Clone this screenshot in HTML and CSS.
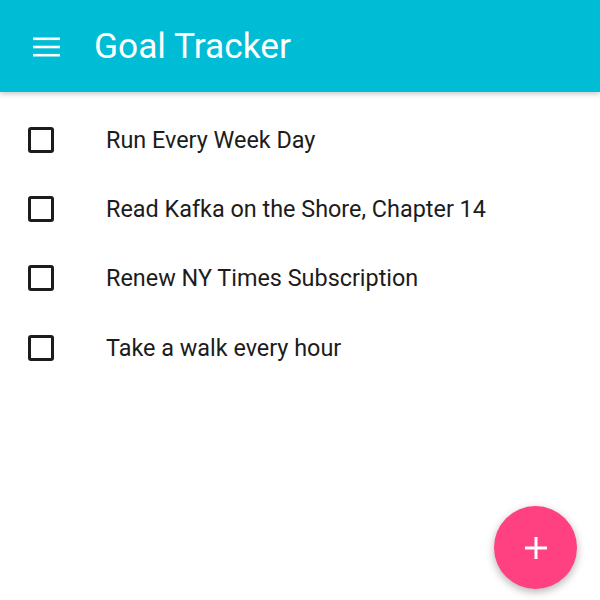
FILE: index.html
```html
<!DOCTYPE html>
<html>
<head>
<meta charset="utf-8">
<link rel="stylesheet" href="styles.css">
</head>
<body>
<header class="toolbar">
  <svg class="menu" width="28" height="20" viewBox="0 0 28 20">
    <rect x="0" y="0.5" width="27" height="2.6" fill="#fff"/>
    <rect x="0" y="8.7" width="27" height="2.6" fill="#fff"/>
    <rect x="0" y="16.9" width="27" height="2.6" fill="#fff"/>
  </svg>
  <h1 class="title">Goal Tracker</h1>
</header>
<ul class="list">
  <li class="item"><span class="box"></span><span class="label">Run Every Week Day</span></li>
  <li class="item"><span class="box"></span><span class="label">Read Kafka on the Shore, Chapter 14</span></li>
  <li class="item"><span class="box"></span><span class="label">Renew NY Times Subscription</span></li>
  <li class="item"><span class="box"></span><span class="label">Take a walk every hour</span></li>
</ul>
<button class="fab" aria-label="Add">
  <svg width="22" height="22" viewBox="0 0 22 22">
    <rect x="9.5" y="0" width="3" height="22" fill="#fff"/>
    <rect x="0" y="9.5" width="22" height="3" fill="#fff"/>
  </svg>
</button>
</body>
</html>
```
FILE: styles.css
```css
html, body {
  margin: 0;
  padding: 0;
  height: 100%;
  background: #fff;
  font-family: Roboto, "Noto Sans", sans-serif;
}
.toolbar {
  height: 92px;
  background: #00bcd4;
  display: flex;
  align-items: center;
  padding-left: 33px;
  box-shadow: 0 2px 5px rgba(0,0,0,0.22);
  position: relative;
}
.menu {
  display: block;
  margin-top: 2px;
}
.title {
  margin: 0 0 0 33px;
  color: #fff;
  font-weight: 400;
  font-size: 35.3px;
  letter-spacing: 0;
}
.list {
  list-style: none;
  margin: 0;
  padding: 13px 0 0 0;
}
.item {
  height: 69.33px;
  display: flex;
  align-items: center;
  padding-left: 28px;
}
.box {
  width: 20px;
  height: 20px;
  border: 3px solid #1c1c1c;
  border-radius: 3px;
  flex: none;
}
.label {
  margin-left: 52px;
  font-size: 23.4px;
  color: #1c1c1c;
}
.fab {
  position: fixed;
  right: 23px;
  bottom: 11px;
  width: 83px;
  height: 83px;
  border-radius: 50%;
  border: none;
  background: #ff4081;
  display: flex;
  align-items: center;
  justify-content: center;
  padding: 0;
  box-shadow: 0 3px 8px rgba(0,0,0,0.3);
}
.fab svg { display: block; }
```
